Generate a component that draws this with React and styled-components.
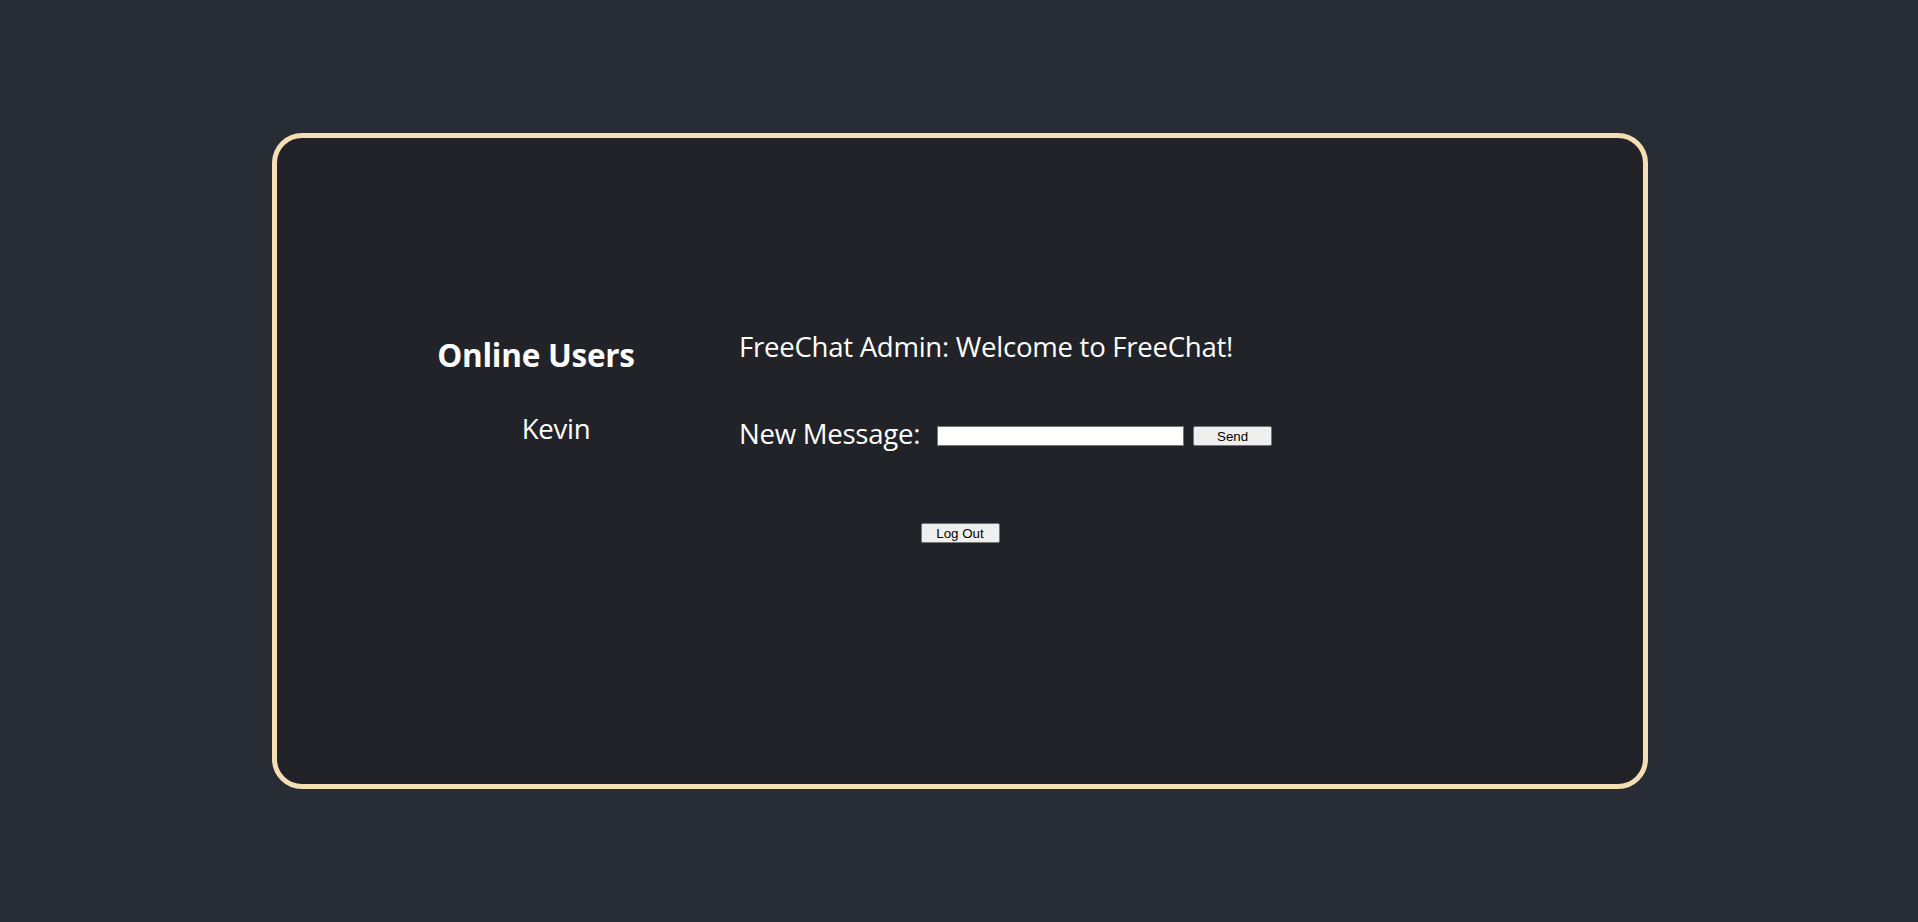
import React from 'react';
import styled, { createGlobalStyle } from 'styled-components';

const GlobalStyle = createGlobalStyle`
  html, body {
    margin: 0;
    padding: 0;
    background: #282c34;
  }
  body {
    font-family: 'Open Sans', 'Noto Sans', sans-serif;
    color: #ffffff;
  }
`;

const Page = styled.div`
  width: 100%;
  height: 922px;
  display: flex;
  align-items: center;
  justify-content: center;
  box-sizing: border-box;
  padding-left: 2px;
`;

const Card = styled.main`
  width: 1376px;
  height: 656px;
  box-sizing: border-box;
  border: 5px solid #f5deb3;
  border-radius: 30px;
  background: #212329;
  padding-top: 192px;
  display: flex;
  flex-direction: column;
  align-items: center;
`;

const Row = styled.div`
  display: grid;
  grid-template-columns: 406px 848px;
  align-items: start;
`;

const UsersColumn = styled.section`
  text-align: center;
`;

const UsersTitle = styled.h3`
  margin: 5.7px 0 0;
  font-size: 31.5px;
  line-height: 1.2;
  letter-spacing: -0.25px;
  font-weight: 700;
`;

const UserList = styled.ul`
  list-style: none;
  margin: 38.8px 0 0;
  padding: 0 0 0 40px;
`;

const BodyText = styled.p`
  margin: 0;
  font-size: 27.6px;
  line-height: 1.2;
  letter-spacing: -0.28px;
`;

const UserItem = styled(BodyText).attrs({ as: 'li' })``;

const ChatColumn = styled.section`
  text-align: left;
`;

const Form = styled.form`
  display: flex;
  align-items: flex-start;
  margin-top: 54px;
`;

const Label = styled(BodyText).attrs({ as: 'label' })`
  margin-right: 17px;
`;

const TextInput = styled.input`
  width: 247px;
  height: 20px;
  box-sizing: border-box;
  border: 1px solid #767676;
  background: #ffffff;
  padding: 1px 2px;
  margin: 9px 9px 0 0;
  font-family: 'Liberation Sans', Arial, sans-serif;
  font-size: 13.33px;
`;

const Button = styled.button`
  width: 79px;
  height: 20px;
  box-sizing: border-box;
  border: 1px solid #767676;
  border-radius: 2px;
  background: #efefef;
  color: #000000;
  padding: 0;
  font-family: 'Liberation Sans', Arial, sans-serif;
  font-size: 13.33px;
  margin-top: ${(p) => p.$top || 0}px;
`;

const App = () => (
  <>
    <GlobalStyle />
    <Page>
      <Card>
        <Row>
          <UsersColumn>
            <UsersTitle>Online Users</UsersTitle>
            <UserList>
              <UserItem>Kevin</UserItem>
            </UserList>
          </UsersColumn>
          <ChatColumn>
            <BodyText>FreeChat Admin: Welcome to FreeChat!</BodyText>
            <Form onSubmit={(e) => e.preventDefault()}>
              <Label htmlFor="msg">New Message:</Label>
              <TextInput id="msg" type="text" />
              <Button type="submit" $top={9}>Send</Button>
            </Form>
          </ChatColumn>
        </Row>
        <Button type="button" $top={73}>Log Out</Button>
      </Card>
    </Page>
  </>
);

export default App;
